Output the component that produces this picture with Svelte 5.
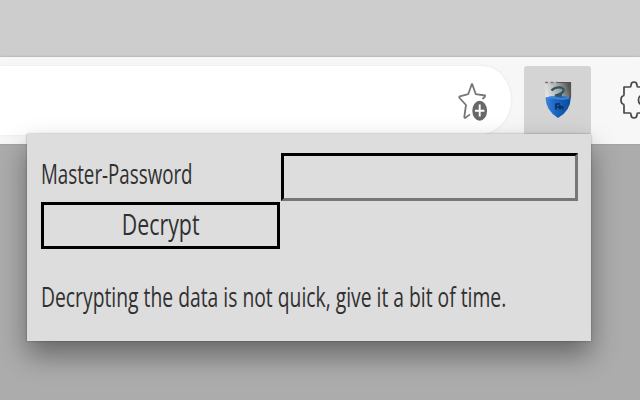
<script>
  let password = $state('');
</script>

<div class="window">
  <div class="tabs"></div>
  <div class="toolbar">
    <div class="address">
      <svg class="star" width="32" height="42" viewBox="0 0 32 42">
        <path d="M14 4.5 L17.8 15.2 L27 16.5 Q27.6 17 26.6 18 L24.5 20 M14 4.5 L10.2 15.2 L1.8 17.3 Q.7 18 1.6 19 L8 26 L6.3 38 Q6.4 39.3 7.7 38.6 L12 35.4" fill="none" stroke="#777" stroke-width="1.8" stroke-linejoin="round" />
        <ellipse cx="21.7" cy="31.7" rx="7.4" ry="10" fill="#686868" />
        <path d="M21.7 25.5V37.5M17 31.7H26.4" stroke="#fff" stroke-width="1.9" />
      </svg>
    </div>
    <div class="extension">
      <svg width="28" height="38" viewBox="0 0 28 38">
        <defs>
          <linearGradient id="steel" x1="0" x2="1" y1="0.6" y2="0.4">
            <stop offset="0" stop-color="#e6e6e6" />
            <stop offset=".5" stop-color="#adadad" />
            <stop offset="1" stop-color="#4c4c4c" />
          </linearGradient>
          <linearGradient id="blue" x1="0" x2="1">
            <stop offset="0" stop-color="#3b83dc" />
            <stop offset=".45" stop-color="#1763c0" />
            <stop offset="1" stop-color="#0c4a98" />
          </linearGradient>
        </defs>
        <path d="M1 1H27V17H1.5Z" fill="url(#steel)" />
        <path d="M1 1.5H14" fill="none" stroke="#777" stroke-width="1.4" stroke-dasharray="3 2.5" />
        <path d="M14 1.5H26.5V16" fill="none" stroke="#555" stroke-width="1.2" />
        <path d="M1.5 16.5Q14 14 26.8 16.5Q26.5 30 14 37Q2 30 1.5 16.5Z" fill="url(#blue)" />
        <path d="M3 17.5Q8 15.5 12 17T25 17" fill="none" stroke="#3b86e0" stroke-width="2.2" />
        <path d="M7.5 9.5Q11 5.5 17 6.5Q21.5 8 18.5 11.5Q15.5 13.5 11 14.5H18" fill="none" stroke="#2d5964" stroke-width="2.3" />
        <path d="M12 22.5V28.5M12.5 23H16M16 24V28.5M18.5 25V28.5M13 26H18" stroke="#0b2e60" stroke-width="1.7" />
      </svg>
    </div>
    <svg class="puzzle" width="34" height="42" viewBox="0 0 34 42">
      <path d="M4 8H10Q11 8 11 6.5Q11 3 14 3T17 6.5Q17 8 18 8H24V15Q24 16 22.5 16Q18.5 16.5 18.5 21T22.5 25.5Q24 26 24 27V34H18Q17 34 17 35.5Q17 39 14 39T11 35.5Q11 34 10 34H4V26.5Q4 25 3 25Q1 24.5 1 21T3 17Q4 17 4 15.5Z" fill="none" stroke="#484848" stroke-width="1.7" stroke-linejoin="round" />
    </svg>
  </div>

  <form class="popup" onsubmit={(e) => e.preventDefault()}>
    <div class="row">
      <label for="master"><span class="label-text">Master-Password</span></label>
      <input id="master" type="password" bind:value={password} />
    </div>
    <button type="submit"><span>Decrypt</span></button>
    <p><span>Decrypting the data is not quick, give it a bit of time.</span></p>
  </form>
</div>

<style>
  .window {
    position: relative;
    width: 640px;
    height: 400px;
    overflow: hidden;
    background: #acacac;
    font-family: "Open Sans", "Noto Sans", sans-serif;
    color: #303030;
  }
  .tabs {
    height: 57px;
    background: #cdcdcd;
  }
  .toolbar {
    display: flex;
    box-sizing: border-box;
    height: 87px;
    padding-top: 9px;
    background: #f7f7f7;
    box-shadow: 0 0 2px #999;
  }
  .address {
    display: flex;
    justify-content: flex-end;
    box-sizing: border-box;
    flex: 0 0 511px;
    height: 69px;
    padding: 13px 21px 0 0;
    border-radius: 0 29px 34px 0 / 0 34px 35px 0;
    background: #fff;
    box-shadow: 0 0 3px #e4e4e4;
  }
  .extension {
    display: flex;
    justify-content: center;
    flex: 0 0 67px;
    height: 69px;
    margin-left: 13px;
    padding-top: 15px;
    box-sizing: border-box;
    border-radius: 3px;
    background: #d4d4d4;
  }
  .puzzle {
    flex: none;
    margin: 13px 0 0 28.5px;
  }
  .popup {
    position: absolute;
    left: 26.5px;
    top: 134px;
    width: 564.5px;
    height: 206.5px;
    box-sizing: border-box;
    padding: 19px 13px 0 14.5px;
    background: #ddd;
    box-shadow: 0 0 2px #0005, 0 14px 26px #0006;
  }
  .row {
    display: flex;
  }
  label {
    width: 240px;
    height: 49px;
    font-size: 27px;
    line-height: 41px;
  }
  span {
    display: inline-block;
    white-space: nowrap;
    transform-origin: left;
  }
  .label-text {
    transform: scaleX(0.694);
  }
  input {
    box-sizing: border-box;
    width: 296.5px;
    height: 48px;
    border: 3px inset #767676;
    border-color: #000 #767676 #767676 #000;
    border-radius: 0;
    background: transparent;
    outline: none;
  }
  button {
    display: block;
    box-sizing: border-box;
    width: 239px;
    height: 47px;
    padding: 0 0 3px;
    border: 3px solid #000;
    border-radius: 0;
    background: transparent;
    color: #303030;
    font: 30px/38px "Open Sans", "Noto Sans", sans-serif;
  }
  button span {
    transform: scaleX(0.71);
    transform-origin: center;
  }
  p {
    margin: 28px 0 0;
    font-size: 27px;
    line-height: 40px;
  }
  p span {
    transform: scaleX(0.715);
  }
</style>
